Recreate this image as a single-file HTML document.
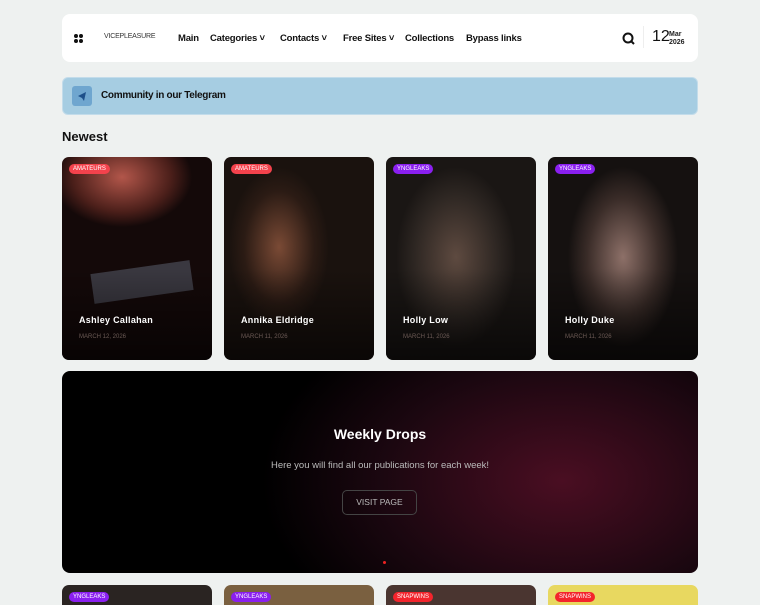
<!DOCTYPE html>
<html><head><meta charset="utf-8"><style>
*{margin:0;padding:0;box-sizing:border-box}
body{width:760px;height:600px;overflow:hidden;background:#eef1f0;font-family:"Liberation Sans",sans-serif;position:relative}
.hdr{position:absolute;left:62px;top:14px;width:636px;height:48px;background:#fff;border-radius:8px}
.nav{position:absolute;top:19px;font-size:9.5px;font-weight:bold;color:#111;letter-spacing:-.2px}
.tg{position:absolute;left:62px;top:77px;width:636px;height:38px;background:#a6cde2;border-radius:6px;border:1px solid #c3dcea}
.tg .ic{position:absolute;left:9px;top:8px;width:20px;height:20px;background:#6fa6cf;border-radius:3px}
.tg span{position:absolute;left:38px;top:12px;font-size:10px;font-weight:bold;color:#111;letter-spacing:-.3px}
h2{position:absolute;left:62px;top:129px;font-size:13px;font-weight:bold;color:#111}
.card{position:absolute;top:157px;width:150px;height:203px;border-radius:7px;overflow:hidden}
.tag{position:absolute;left:7px;top:7px;height:10px;padding:0 4px;border-radius:5px;font-size:6px;color:#fff;line-height:10px}
.nm{position:absolute;left:17px;top:158px;font-size:9px;font-weight:bold;color:#fff;letter-spacing:.3px}
.dt{position:absolute;left:17px;top:177px;font-size:6px;color:#6b5a55}
.ban{position:absolute;left:62px;top:371px;width:636px;height:202px;border-radius:8px;background:radial-gradient(ellipse 300px 190px at 500px 110px,#4a0e22,#1b0710 60%,#000 100%);}
.bc{position:absolute;top:585px;width:150px;height:20px;border-radius:7px 7px 0 0;overflow:hidden}
</style></head><body>
<div class="hdr">
 <div style="position:absolute;left:12px;top:20px;width:10px;height:10px">
  <div style="position:absolute;left:0;top:0;width:4px;height:4px;background:#111;border-radius:50%"></div>
  <div style="position:absolute;left:5px;top:0;width:4px;height:4px;background:#111;border-radius:50%"></div>
  <div style="position:absolute;left:0;top:5px;width:4px;height:4px;background:#111;border-radius:50%"></div>
  <div style="position:absolute;left:5px;top:5px;width:4px;height:4px;background:#111;border-radius:50%"></div>
 </div>
 <div style="position:absolute;left:42px;top:19px;font-size:7px;color:#333;letter-spacing:-.2px">VICEPLEASURE</div>
 <div class="nav" style="left:116px">Main</div>
 <div class="nav" style="left:148px">Categories ˅</div>
 <div class="nav" style="left:218px">Contacts ˅</div>
 <div class="nav" style="left:281px">Free Sites ˅</div>
 <div class="nav" style="left:343px">Collections</div>
 <div class="nav" style="left:404px">Bypass links</div>
 <svg style="position:absolute;left:560px;top:18px" width="14" height="14"><circle cx="6" cy="6" r="4.5" fill="none" stroke="#111" stroke-width="2"/><path d="M9 9l3 3" stroke="#111" stroke-width="2"/></svg>
 <div style="position:absolute;left:581px;top:12px;width:1px;height:22px;background:#eee"></div>
 <div style="position:absolute;left:590px;top:14px;font-size:16px;color:#111">12</div>
 <div style="position:absolute;left:607px;top:17px;font-size:7px;line-height:8px;font-weight:bold;color:#222">Mar<br>2026</div>
</div>
<div class="tg"><div class="ic"><svg width="20" height="20"><path d="M6 10l8-4-2 9-2-3z" fill="#1d4f8a"/></svg></div><span>Community in our Telegram</span></div>
<h2>Newest</h2>
<div class="card" style="left:62px;background:radial-gradient(ellipse 70px 50px at 60px 20px,#b2564a,#4b1f1a 70%,#140909 100%),#140909"><div style="position:absolute;left:30px;top:110px;width:100px;height:30px;background:#3a3840;transform:rotate(-8deg)"></div><div style="position:absolute;inset:0;background:linear-gradient(transparent 55%,rgba(0,0,0,.6))"></div><div class="tag" style="background:#f3424c">AMATEURS</div><div class="nm">Ashley Callahan</div><div class="dt">MARCH 12, 2026</div></div>
<div class="card" style="left:224px;background:radial-gradient(ellipse 50px 80px at 55px 90px,#7a4a35,#2b1b14 70%,#1a120e)"><div style="position:absolute;inset:0;background:linear-gradient(transparent 55%,rgba(0,0,0,.6))"></div><div class="tag" style="background:#f3424c">AMATEURS</div><div class="nm">Annika Eldridge</div><div class="dt">MARCH 11, 2026</div></div>
<div class="card" style="left:386px;background:radial-gradient(ellipse 60px 90px at 70px 100px,#5e4a40,#2d2622 70%,#1a1614)"><div style="position:absolute;inset:0;background:linear-gradient(transparent 55%,rgba(0,0,0,.6))"></div><div class="tag" style="background:#8a1ff0">YNGLEAKS</div><div class="nm">Holly Low</div><div class="dt">MARCH 11, 2026</div></div>
<div class="card" style="left:548px;background:radial-gradient(ellipse 55px 90px at 75px 100px,#8d7068,#3a2c28 65%,#151110)"><div style="position:absolute;inset:0;background:linear-gradient(transparent 55%,rgba(0,0,0,.6))"></div><div class="tag" style="background:#8a1ff0">YNGLEAKS</div><div class="nm">Holly Duke</div><div class="dt">MARCH 11, 2026</div></div>
<div class="ban">
 <div style="position:absolute;width:100%;top:55px;text-align:center;color:#fff;font-size:14px;font-weight:bold">Weekly Drops</div>
 <div style="position:absolute;width:100%;top:89px;text-align:center;color:#bbb;font-size:9.5px">Here you will find all our publications for each week!</div>
 <div style="position:absolute;left:280px;top:119px;width:75px;height:25px;border:1px solid #444;border-radius:5px;color:#bbb;font-size:8.5px;text-align:center;line-height:23px">VISIT PAGE</div>
 <div style="position:absolute;left:321px;top:190px;width:3px;height:3px;background:#e22;border-radius:50%"></div>
</div>
<div class="bc" style="left:62px;background:#2a2422"><div class="tag" style="background:#8a1ff0">YNGLEAKS</div></div>
<div class="bc" style="left:224px;background:#7a6040"><div class="tag" style="background:#8a1ff0">YNGLEAKS</div></div>
<div class="bc" style="left:386px;background:#4a3530"><div class="tag" style="background:#f3242c">SNAPWINS</div></div>
<div class="bc" style="left:548px;background:#e8d860"><div class="tag" style="background:#f3242c">SNAPWINS</div></div>
</body></html>
